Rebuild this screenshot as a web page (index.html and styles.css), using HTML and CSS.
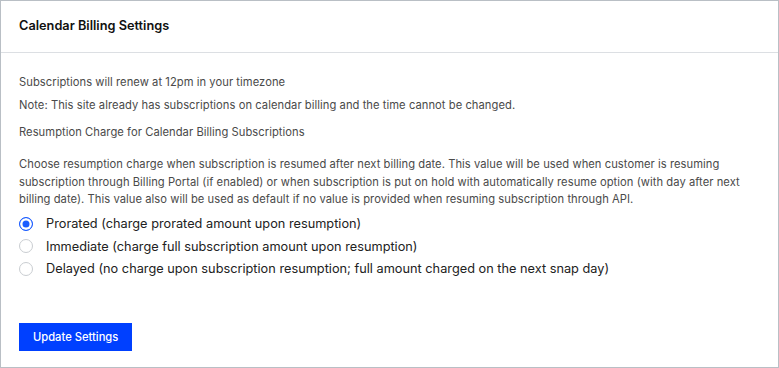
FILE: index.html
```html
<!DOCTYPE html>
<html lang="en">
<head>
<meta charset="UTF-8" />
<meta name="viewport" content="width=device-width, initial-scale=1" />
<title>Calendar Billing Settings</title>
<link rel="stylesheet" href="styles.css">
</head>
<body>

<section class="card">
  <header class="card-header">
    <h2>Calendar Billing Settings</h2>
  </header>

  <div class="card-body">
    <p class="renew">Subscriptions will renew at 12pm in your timezone</p>
    <p class="note">Note: This site already has subscriptions on calendar billing and the time cannot be changed.</p>
    <p class="label">Resumption Charge for Calendar Billing Subscriptions</p>
    <p class="help">Choose resumption charge when subscription is resumed after next billing date. This value will be used when customer is resuming subscription through Billing Portal (if enabled) or when subscription is put on hold with automatically resume option (with day after next billing date). This value also will be used as default if no value is provided when resuming subscription through API.</p>

    <div class="options">
      <label class="option">
        <input type="radio" name="resumption" value="prorated" checked />
        <span>Prorated (charge prorated amount upon resumption)</span>
      </label>
      <label class="option">
        <input type="radio" name="resumption" value="immediate" />
        <span>Immediate (charge full subscription amount upon resumption)</span>
      </label>
      <label class="option">
        <input type="radio" name="resumption" value="delayed" />
        <span>Delayed (no charge upon subscription resumption; full amount charged on the next snap day)</span>
      </label>
    </div>

    <button class="btn-primary">Update Settings</button>
  </div>
</section>

</body>
</html>
```

FILE: styles.css
```css
/* base */
html, body {
  margin: 0; padding: 0;
  font-family: Inter, 'Noto Sans', sans-serif;
  color: #222;
  background: #fff;
}

.card {
  box-sizing: border-box;
  height: 368px;
  border: 1px solid #b9bfc5;
}

.card-header {
  box-sizing: border-box;
  height: 52px;
  display: flex;
  align-items: center;
  padding: 0 18px 3px;
  border-bottom: 1px solid #dcdfe3;
}
.card-header h2 {
  margin: 0;
  font-size: 12.75px;
  font-weight: 600;
  color: #111;
}

.card-body {
  padding: 21px 18px 0;
  font-size: 11.2px;
  letter-spacing: 0.05px;
  color: #4a4a4a;
}

.card-body p {
  margin: 0;
  line-height: 17px;
}
.renew { margin-bottom: 6px !important; }
.note { margin-bottom: 10px !important; }
.label { margin-bottom: 15px !important; }
.help { line-height: 17.5px !important; margin-bottom: 4px !important; }

.options {
  display: flex;
  flex-direction: column;
}
.option {
  display: flex;
  align-items: center;
  height: 22.5px;
  font-size: 12.75px;
  letter-spacing: 0;
  color: #222;
  cursor: pointer;
}
.option input {
  appearance: none;
  box-sizing: border-box;
  margin: 0 13px 0 0;
  width: 14px; height: 14px;
  border: 1px solid #c9cdd1;
  border-radius: 50%;
  background: #fff;
  cursor: pointer;
}
.option input:checked {
  border: 1.5px solid #1a5cff;
  background: #1a5cff;
  box-shadow: inset 0 0 0 2.5px #fff;
}

.btn-primary {
  margin-top: 43px;
  background: #0040ff;
  color: #fff;
  border: none;
  height: 28px;
  padding: 0 14px;
  font-family: inherit;
  font-size: 11.2px;
  font-weight: 500;
  cursor: pointer;
}
.btn-primary:hover {
  background: #0033cc;
}
```
